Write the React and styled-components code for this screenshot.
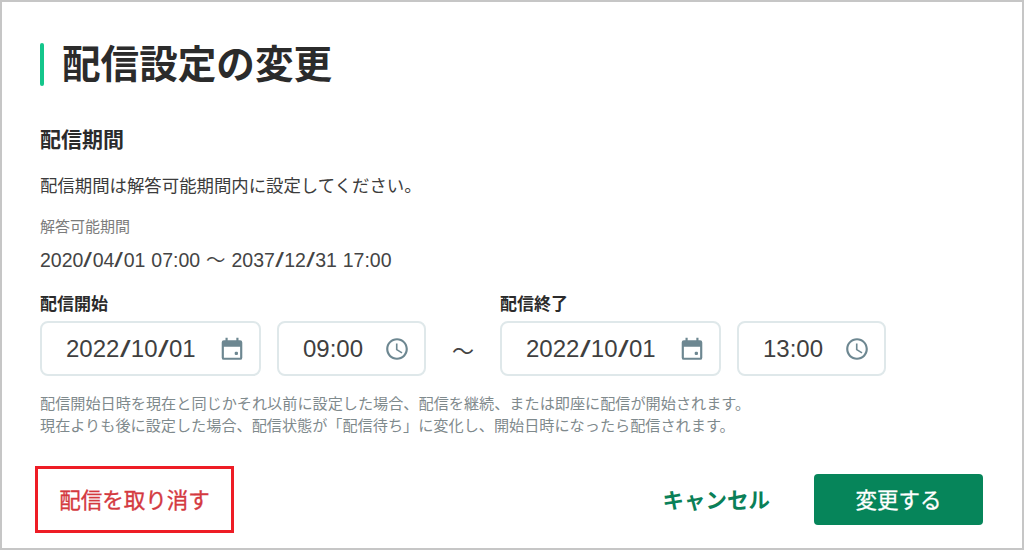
import React from 'react';
import styled, { createGlobalStyle } from 'styled-components';
import { MdAccessTime } from 'react-icons/md';

const GlobalStyle = createGlobalStyle`
  html, body {
    margin: 0;
    padding: 0;
    background: #fff;
  }
  * {
    box-sizing: border-box;
  }
`;

const Frame = styled.div`
  width: 1024px;
  height: 550px;
  border: 2px solid #c6c6c6;
  padding: 41px 38px 0 38px;
  overflow: hidden;
  background: #fff;
  color: #2b2b2b;
  font-family: "Liberation Sans", "Noto Sans CJK JP", sans-serif;
`;

const Title = styled.h1`
  display: flex;
  align-items: center;
  gap: 18px;
  margin: 0;
  height: 43px;
  font-size: 38.6px;
  line-height: 43px;
  font-weight: 700;

  &::before {
    content: '';
    width: 4px;
    height: 43px;
    border-radius: 2px;
    background: #14c68b;
  }
`;

const SectionTitle = styled.h2`
  margin: 39px 0 0;
  font-size: 21px;
  line-height: 30px;
  font-weight: 700;
`;

const Lead = styled.p`
  margin: 18px 0 0;
  font-size: 17.4px;
  line-height: 26px;
  color: #3c3c3c;
`;

const Caption = styled.div`
  margin-top: 17px;
  font-size: 15px;
  line-height: 22px;
  color: #7c7c7c;
`;

const Period = styled.div`
  margin-top: 9px;
  font-size: 19.5px;
  line-height: 26px;
  color: #444;
  word-spacing: 0.5px;
`;

const Slash = styled.span`
  display: inline-block;
  margin: 0 0.1em;
  transform: scaleX(1.6);
`;

const Range = styled.div`
  display: flex;
  align-items: flex-end;
  margin-top: 20px;
`;

const Group = styled.div`
  display: flex;
  flex-direction: column;
`;

const Label = styled.div`
  margin-bottom: 4px;
  font-size: 17px;
  line-height: 24px;
  font-weight: 700;
`;

const Fields = styled.div`
  display: flex;
  gap: 16px;
`;

const Field = styled.div`
  display: flex;
  align-items: center;
  justify-content: space-between;
  width: ${(p) => p.$width}px;
  height: 55px;
  padding: 0 14px 0 24px;
  border: 2px solid #dfe8ea;
  border-radius: 8px;
  font-size: 24px;
  color: #3f3f3f;

  svg {
    flex: none;
    color: #6d8791;
  }
`;

const Tilde = styled.div`
  width: 74px;
  height: 55px;
  display: flex;
  align-items: center;
  justify-content: center;
  font-size: 22px;
  color: #444;
`;

const Note = styled.p`
  margin: 17px 0 0;
  font-size: 15.15px;
  line-height: 22px;
  color: #7f8a8d;
`;

const Footer = styled.div`
  display: flex;
  align-items: center;
  justify-content: space-between;
  margin-top: 29px;
  margin-left: -5px;
  margin-right: 1px;
`;

const RemoveButton = styled.div`
  display: flex;
  align-items: center;
  justify-content: center;
  width: 199px;
  height: 67px;
  padding-bottom: 3px;
  border: 3px solid #ee1c25;
  font-size: 21.5px;
  color: #d4393f;
  -webkit-text-stroke: 0.35px #d4393f;
`;

const Actions = styled.div`
  display: flex;
  align-items: center;
  gap: 44px;
`;

const CancelButton = styled.div`
  padding-bottom: 3px;
  font-size: 21.5px;
  font-weight: 700;
  color: #0a8058;
`;

const SubmitButton = styled.div`
  display: flex;
  align-items: center;
  justify-content: center;
  width: 169px;
  height: 51px;
  padding-bottom: 3px;
  border-radius: 4px;
  background: #06855a;
  font-size: 21.5px;
  color: #fff;
  -webkit-text-stroke: 0.3px #fff;
`;

const CalendarIcon = () => (
  <svg width="26" height="26" viewBox="0 0 24 24" fill="currentColor">
    <path d="M6 1.5h2V4h8V1.5h2V4h1.5A2 2 0 0 1 21.5 6v14a2 2 0 0 1-2 2h-15a2 2 0 0 1-2-2V6a2 2 0 0 1 2-2H6zM4.5 10v10h15V10z" />
    <rect x="14.5" y="14.5" width="3" height="3" rx="1" />
  </svg>
);

// the slashes are wider in the design than in the font
const DateText = ({ value }) => (
  <span>
    {value.split('/').map((part, i) => (
      <React.Fragment key={i}>
        {i > 0 && <Slash>/</Slash>}
        {part}
      </React.Fragment>
    ))}
  </span>
);

const DateTimeGroup = ({ label, date, time }) => (
  <Group>
    <Label>{label}</Label>
    <Fields>
      <Field $width={221}>
        <DateText value={date} />
        <CalendarIcon />
      </Field>
      <Field $width={149}>
        {time}
        <MdAccessTime size={26} />
      </Field>
    </Fields>
  </Group>
);

const App = () => {
  return (
    <Frame>
      <GlobalStyle />
      <Title>配信設定の変更</Title>
      <SectionTitle>配信期間</SectionTitle>
      <Lead>配信期間は解答可能期間内に設定してください。</Lead>
      <Caption>解答可能期間</Caption>
      <Period>
        <DateText value="2020/04/01" /> 07:00 〜 <DateText value="2037/12/31" /> 17:00
      </Period>
      <Range>
        <DateTimeGroup label="配信開始" date="2022/10/01" time="09:00" />
        <Tilde>〜</Tilde>
        <DateTimeGroup label="配信終了" date="2022/10/01" time="13:00" />
      </Range>
      <Note>
        配信開始日時を現在と同じかそれ以前に設定した場合、配信を継続、または即座に配信が開始されます。
        <br />
        現在よりも後に設定した場合、配信状態が「配信待ち」に変化し、開始日時になったら配信されます。
      </Note>
      <Footer>
        <RemoveButton>配信を取り消す</RemoveButton>
        <Actions>
          <CancelButton>キャンセル</CancelButton>
          <SubmitButton>変更する</SubmitButton>
        </Actions>
      </Footer>
    </Frame>
  );
};

export default App;
